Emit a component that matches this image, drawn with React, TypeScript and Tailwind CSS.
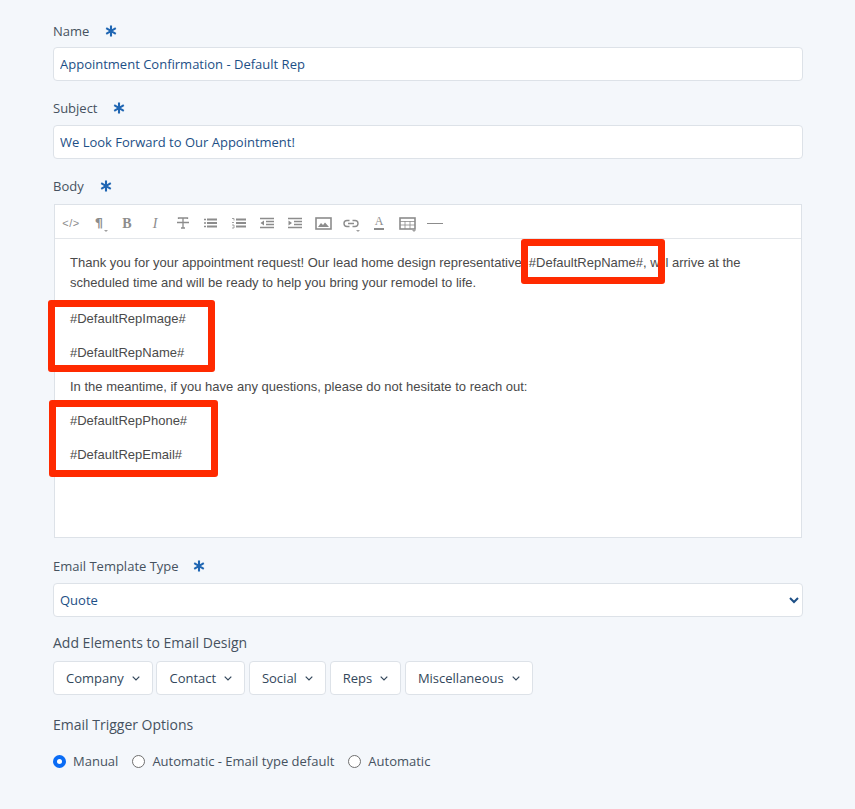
import * as React from "react";

const Asterisk = () => (
  <svg width="12" height="12" viewBox="0 0 12 12" className="text-[#1f66b3]" aria-hidden>
    <path d="M6 .5v11M1.2 3.2l9.6 5.6M10.8 3.2l-9.6 5.6" stroke="currentColor" strokeWidth="2.1" fill="none" />
  </svg>
);

const Label: React.FC<{ text: string; required?: boolean; gap?: string; size?: string }> = ({
  text,
  required,
  gap = "gap-4",
  size = "text-[13px]",
}) => (
  <div className={`flex h-[18px] items-center ${gap} ${size} leading-[18px] text-[#46525f]`}>
    <span>{text}</span>
    {required && <Asterisk />}
  </div>
);

const Tool: React.FC<{ caret?: boolean; children: React.ReactNode }> = ({ caret, children }) => (
  <div className="relative flex h-full w-[28px] items-center justify-center text-[#8c8c8c]">
    {children}
    {caret && <span className="absolute bottom-[6px] right-[5px] h-0 w-0 border-x-2 border-t-2 border-x-transparent border-t-[#a0a0a0]" />}
  </div>
);

const Icon: React.FC<{ children: React.ReactNode; w?: number; h?: number }> = ({ children, w = 16, h = 14 }) => (
  <svg width={w} height={h} viewBox={`0 0 ${w} ${h}`} fill="none" stroke="currentColor" aria-hidden>
    {children}
  </svg>
);

const Toolbar = () => (
  <div className="flex h-[34px] items-center border-b border-[#e3e6ea] pl-[2px] pt-[3px]">
    <Tool>
      <span className="font-['Liberation_Sans',sans-serif] text-[11px] tracking-[0.5px]">&lt;/&gt;</span>
    </Tool>
    <Tool caret>
      <span className="font-['DejaVu_Sans',sans-serif] text-[13px] font-bold">¶</span>
    </Tool>
    <Tool>
      <span className="font-['Liberation_Serif',serif] text-[14px] font-bold">B</span>
    </Tool>
    <Tool>
      <span className="font-['Liberation_Serif',serif] text-[14px] italic">I</span>
    </Tool>
    <Tool>
      <Icon w={12} h={12}>
        <path d="M1.5 2V1h9v1M6 1v10M4 11h4M0 5.5h12" strokeWidth="1.3" />
      </Icon>
    </Tool>
    <Tool>
      <Icon>
        <path d="M4 3.5h10M4 7h10M4 10.5h10" strokeWidth="2" />
        <path d="M1 3.5h2M1 7h2M1 10.5h2" strokeWidth="1.5" />
      </Icon>
    </Tool>
    <Tool>
      <Icon>
        <path d="M5 3.5h10M5 7h10M5 10.5h10" strokeWidth="2" />
        <path d="M1 2.5h2v2M1 6.5h2M1 9h2v3H1" strokeWidth="0.8" />
      </Icon>
    </Tool>
    <Tool>
      <Icon>
        <path d="M1 2.5h14M7 5.5h8M7 8.5h8M1 11.5h14" strokeWidth="1.5" />
        <path d="M5 4.5v5L1.5 7z" fill="currentColor" stroke="none" />
      </Icon>
    </Tool>
    <Tool>
      <Icon>
        <path d="M1 2.5h14M7 5.5h8M7 8.5h8M1 11.5h14" strokeWidth="1.5" />
        <path d="M1.5 4.5v5L5 7z" fill="currentColor" stroke="none" />
      </Icon>
    </Tool>
    <Tool>
      <Icon w={17} h={13}>
        <rect x="1" y="1" width="15" height="11" strokeWidth="1.6" />
        <path d="M3 10l3-4 2 2 2-2.5 4 4.5z" fill="currentColor" stroke="none" />
      </Icon>
    </Tool>
    <Tool caret>
      <Icon w={16} h={9}>
        <path d="M6.5 1.5H4a3 3 0 0 0 0 6h2.5M9.5 1.5H12a3 3 0 0 1 0 6H9.5M5 4.5h6" strokeWidth="1.4" />
      </Icon>
    </Tool>
    <Tool>
      <div className="flex flex-col items-center">
        <span className="font-['Liberation_Serif',serif] text-[12px] leading-[11px]">A</span>
        <span className="mt-[1px] h-[2px] w-[10px] bg-[#8c8c8c]" />
      </div>
    </Tool>
    <Tool caret>
      <Icon w={17} h={13}>
        <rect x="1" y="1" width="15" height="11" strokeWidth="1.6" />
        <path d="M1 4.5h15M1 8h15M6 4v8M11 4v8" strokeWidth="0.8" />
      </Icon>
    </Tool>
    <Tool>
      <span className="h-px w-[16px] bg-[#8c8c8c]" />
    </Tool>
  </div>
);

const TextField: React.FC<{ value: string }> = ({ value }) => (
  <input
    readOnly
    value={value}
    className="h-[34px] w-full rounded-[4px] border border-[#dde2e8] bg-white px-[6px] text-[13px] text-[#1d4f86] outline-none"
  />
);

const Dropdown: React.FC<{ label: string }> = ({ label }) => (
  <button className="flex h-[34px] items-center gap-[8px] rounded-[4px] border border-[#dde2e8] bg-white pl-[12px] pr-[12px] pt-px text-[13px] text-[#33475b]">
    {label}
    <svg width="8" height="5" viewBox="0 0 8 5" fill="none" stroke="currentColor" strokeWidth="1.2" aria-hidden>
      <path d="M.7.7 4 4 7.3.7" />
    </svg>
  </button>
);

const Radio: React.FC<{ label: string; checked?: boolean }> = ({ label, checked }) => (
  <label className="flex items-center gap-[7px]">
    {checked ? (
      <span className="flex h-[13px] w-[13px] items-center justify-center rounded-full bg-[#0a6cf5]">
        <span className="h-[5px] w-[5px] rounded-full bg-white" />
      </span>
    ) : (
      <span className="h-[13px] w-[13px] rounded-full border border-[#6f6f6f] bg-white" />
    )}
    {label}
  </label>
);

const RedBox: React.FC<{ className: string }> = ({ className }) => (
  <div className={`pointer-events-none absolute rounded-[3px] border-[7px] border-[#ff2a00] ${className}`} />
);

export default function App() {
  return (
    <div className="min-h-[809px] bg-[#f4f7fb] pl-[53px] pr-[52px] pt-[22px] font-['Open_Sans',sans-serif]">
      <Label text="Name" required />
      <div className="mt-[7px]">
        <TextField value="Appointment Confirmation - Default Rep" />
      </div>

      <div className="mt-[18px]">
        <Label text="Subject" required gap="gap-[15px]" />
      </div>
      <div className="mt-[8px]">
        <TextField value="We Look Forward to Our Appointment!" />
      </div>

      <div className="mt-[18px]">
        <Label text="Body" required />
      </div>
      <div className="relative mx-px mt-[9px] h-[334px] border border-[#dde2e8] bg-white">
        <Toolbar />
        <div className="px-[15px] pt-[14px] font-['Liberation_Sans',sans-serif] text-[13px] leading-[20px] text-[#4a4a4a]">
          <p className="mb-[16px]">
            Thank you for your appointment request! Our lead home design representative, #DefaultRepName#, will arrive at the scheduled time and will be ready to help you bring your remodel to life.
          </p>
          <p className="mb-[14px]">#DefaultRepImage#</p>
          <p className="mb-[13.5px]">#DefaultRepName#</p>
          <p className="mb-[14px]">In the meantime, if you have any questions, please do not hesitate to reach out:</p>
          <p className="mb-[14px]">#DefaultRepPhone#</p>
          <p>#DefaultRepEmail#</p>
        </div>
        <RedBox className="left-[466px] top-[34px] h-[45px] w-[144px]" />
        <RedBox className="left-[-7px] top-[95px] h-[72px] w-[167px]" />
        <RedBox className="left-[-6px] top-[195px] h-[77px] w-[169px]" />
      </div>

      <div className="mt-[19px]">
        <Label text="Email Template Type" required gap="gap-[14px]" />
      </div>
      <select className="mt-[8px] block h-[34px] w-full rounded-[4px] border border-[#dde2e8] bg-white px-[2px] text-[13px] text-[#1d4f86] outline-none">
        <option>Quote</option>
      </select>

      <div className="mt-[17px]">
        <Label text="Add Elements to Email Design" size="text-[14px]" />
      </div>
      <div className="mt-[9px] flex gap-[3.75px]">
        <Dropdown label="Company" />
        <Dropdown label="Contact" />
        <Dropdown label="Social" />
        <Dropdown label="Reps" />
        <Dropdown label="Miscellaneous" />
      </div>

      <div className="mt-[21px]">
        <Label text="Email Trigger Options" size="text-[14px]" />
      </div>
      <div className="mt-[18px] flex gap-[14px] text-[13px] leading-[18px] text-[#46525f]">
        <Radio label="Manual" checked />
        <Radio label="Automatic - Email type default" />
        <Radio label="Automatic" />
      </div>
    </div>
  );
}
